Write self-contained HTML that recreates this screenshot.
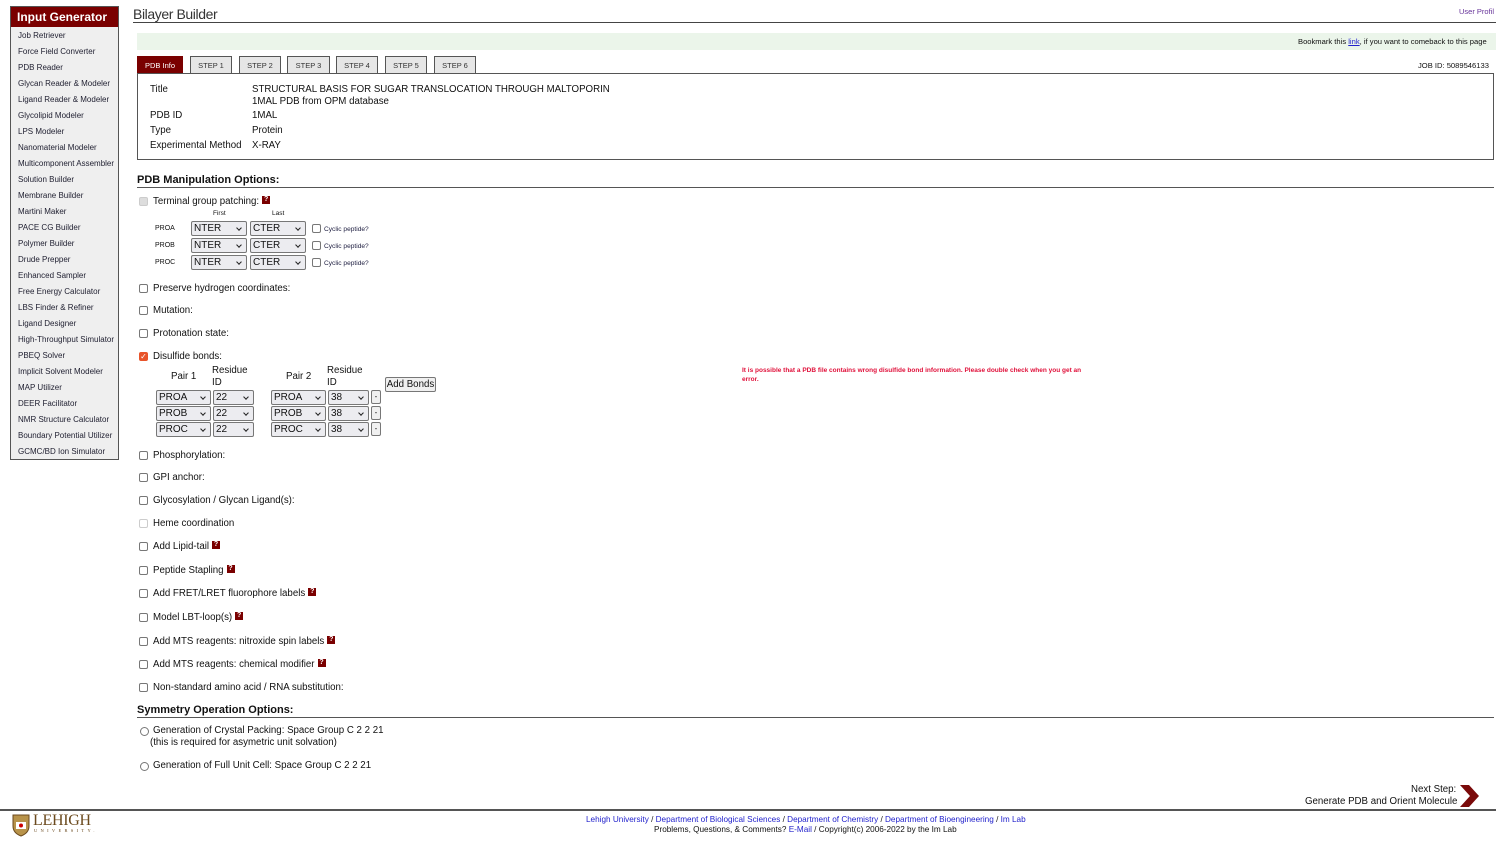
<!DOCTYPE html>
<html><head><meta charset="utf-8">
<style>
*{margin:0;padding:0;box-sizing:border-box}
body{width:1496px;height:846px;position:relative;background:#fff;font-family:"Liberation Sans",Arial,sans-serif;color:#111;overflow:hidden}
.a{position:absolute;white-space:nowrap}
#side{position:absolute;left:10px;top:6px;width:109px;height:454px;background:#efefef;border:1px solid #555}
#side .h{background:#7a0000;color:#fff;font-weight:bold;font-size:12px;height:20px;line-height:20px;padding-left:6px}
#side div.i{position:absolute;left:7px;font-size:8px;color:#223}
.f{font-size:9.7px}
.cb{position:absolute;width:9px;height:9px;border:1px solid #777;border-radius:2px;background:#fff}
.q{display:inline-block;width:8px;height:8px;background:#7a0000;color:#fff;font-size:7px;font-weight:bold;line-height:8px;text-align:center;vertical-align:top;margin-left:3px}
.sel{position:absolute;height:15px;margin-top:-1px;border:1px solid #777;border-radius:2px;background:#ececf0;font-size:10px;line-height:13px;padding-left:2px}
.sel:after{content:"";position:absolute;right:5px;top:4px;width:3px;height:3px;border-right:1px solid #222;border-bottom:1px solid #222;transform:rotate(45deg)}
.tab{position:absolute;top:56px;height:17px;border:1px solid #555;border-bottom:none;background:#e6e6e6;font-size:7.5px;line-height:18px;text-align:center;color:#333}
.rb{position:absolute;width:9px;height:9px;border:1px solid #777;border-radius:50%}
.hd{position:absolute;left:137px;font-weight:bold;font-size:11px}
.ln{position:absolute;left:137px;right:2px;height:1px;background:#555}
.btn{position:absolute;width:10px;height:14px;margin-top:-1px;border:1px solid #777;border-radius:2px;background:#f0f0f0;font-size:8px;text-align:center;line-height:11px}
</style></head><body>
<div id="side"><div class="h">Input Generator</div>
<div class="i" style="top:24px">Job Retriever</div>
<div class="i" style="top:40px">Force Field Converter</div>
<div class="i" style="top:56px">PDB Reader</div>
<div class="i" style="top:72px">Glycan Reader &amp; Modeler</div>
<div class="i" style="top:88px">Ligand Reader &amp; Modeler</div>
<div class="i" style="top:104px">Glycolipid Modeler</div>
<div class="i" style="top:120px">LPS Modeler</div>
<div class="i" style="top:136px">Nanomaterial Modeler</div>
<div class="i" style="top:152px">Multicomponent Assembler</div>
<div class="i" style="top:168px">Solution Builder</div>
<div class="i" style="top:184px">Membrane Builder</div>
<div class="i" style="top:200px">Martini Maker</div>
<div class="i" style="top:216px">PACE CG Builder</div>
<div class="i" style="top:232px">Polymer Builder</div>
<div class="i" style="top:248px">Drude Prepper</div>
<div class="i" style="top:264px">Enhanced Sampler</div>
<div class="i" style="top:280px">Free Energy Calculator</div>
<div class="i" style="top:296px">LBS Finder &amp; Refiner</div>
<div class="i" style="top:312px">Ligand Designer</div>
<div class="i" style="top:328px">High-Throughput Simulator</div>
<div class="i" style="top:344px">PBEQ Solver</div>
<div class="i" style="top:360px">Implicit Solvent Modeler</div>
<div class="i" style="top:376px">MAP Utilizer</div>
<div class="i" style="top:392px">DEER Facilitator</div>
<div class="i" style="top:408px">NMR Structure Calculator</div>
<div class="i" style="top:424px">Boundary Potential Utilizer</div>
<div class="i" style="top:440px">GCMC/BD Ion Simulator</div>
</div>

<div class="a" style="left:133px;top:6px;font-size:14px;color:#333;letter-spacing:-0.4px">Bilayer Builder</div>
<div class="a" style="left:1459px;top:7px;font-size:7.5px;color:#639">User Profil</div>
<div class="a" style="left:133px;top:22px;width:1363px;height:1px;background:#444"></div>
<div class="a" style="left:137px;top:33px;width:1359px;height:17px;background:#ebf5ea"></div>
<div class="a" style="left:1298px;top:37px;font-size:7.6px">Bookmark this <span style="color:#22c;text-decoration:underline">link</span>, if you want to comeback to this page</div>
<div class="a" style="left:1418px;top:61px;font-size:7.6px">JOB ID: 5089546133</div>

<div class="tab" style="left:137px;width:46px;background:#7a0000;color:#fff;border-color:#7a0000">PDB Info</div>
<div class="tab" style="left:190px;width:42px">STEP 1</div>
<div class="tab" style="left:239px;width:42px">STEP 2</div>
<div class="tab" style="left:287px;width:43px">STEP 3</div>
<div class="tab" style="left:336px;width:42px">STEP 4</div>
<div class="tab" style="left:385px;width:42px">STEP 5</div>
<div class="tab" style="left:434px;width:42px">STEP 6</div>
<div class="a" style="left:137px;top:73px;width:1357px;height:87px;border:1px solid #555"></div>
<div class="a f" style="left:150px;top:84px">Title</div>
<div class="a f" style="left:252px;top:84px">STRUCTURAL BASIS FOR SUGAR TRANSLOCATION THROUGH MALTOPORIN</div>
<div class="a f" style="left:252px;top:96px">1MAL PDB from OPM database</div>
<div class="a f" style="left:150px;top:110px">PDB ID</div><div class="a f" style="left:252px;top:110px">1MAL</div>
<div class="a f" style="left:150px;top:125px">Type</div><div class="a f" style="left:252px;top:125px">Protein</div>
<div class="a f" style="left:150px;top:140px">Experimental Method</div><div class="a f" style="left:252px;top:140px">X-RAY</div>

<div class="hd" style="top:174px">PDB Manipulation Options:</div>
<div class="ln" style="top:187px"></div>

<div class="cb" style="left:139px;top:197px;background:#ddd;border-color:#ccc"></div>
<div class="a f" style="left:153px;top:196px">Terminal group patching:<span class="q">?</span></div>
<div class="a" style="left:213px;top:210px;font-size:6.5px">First</div>
<div class="a" style="left:272px;top:210px;font-size:6.5px">Last</div>

<div class="a" style="left:155px;top:225px;font-size:7px">PROA</div>
<div class="sel" style="left:191px;top:222px;width:56px">NTER</div><div class="sel" style="left:250px;top:222px;width:56px">CTER</div>
<div class="cb" style="left:312px;top:224px"></div><div class="a" style="left:324px;top:226px;font-size:6.6px;color:#224">Cyclic peptide?</div>
<div class="a" style="left:155px;top:242px;font-size:7px">PROB</div>
<div class="sel" style="left:191px;top:239px;width:56px">NTER</div><div class="sel" style="left:250px;top:239px;width:56px">CTER</div>
<div class="cb" style="left:312px;top:241px"></div><div class="a" style="left:324px;top:243px;font-size:6.6px;color:#224">Cyclic peptide?</div>
<div class="a" style="left:155px;top:259px;font-size:7px">PROC</div>
<div class="sel" style="left:191px;top:256px;width:56px">NTER</div><div class="sel" style="left:250px;top:256px;width:56px">CTER</div>
<div class="cb" style="left:312px;top:258px"></div><div class="a" style="left:324px;top:260px;font-size:6.6px;color:#224">Cyclic peptide?</div>

<div class="cb" style="left:139px;top:284px"></div><div class="a f" style="left:153px;top:283px">Preserve hydrogen coordinates:</div>
<div class="cb" style="left:139px;top:306px"></div><div class="a f" style="left:153px;top:305px">Mutation:</div>
<div class="cb" style="left:139px;top:329px"></div><div class="a f" style="left:153px;top:328px">Protonation state:</div>
<div class="cb" style="left:139px;top:352px;background:#e8542a;border-color:#e8542a;color:#fff;font-size:8px;line-height:8px;text-align:center">✓</div><div class="a f" style="left:153px;top:351px">Disulfide bonds:</div>

<div class="a f" style="left:171px;top:371px">Pair 1</div>
<div class="a f" style="left:212px;top:365px;line-height:12px;white-space:normal;width:40px">Residue ID</div>
<div class="a f" style="left:286px;top:371px">Pair 2</div>
<div class="a f" style="left:327px;top:365px;line-height:12px;white-space:normal;width:40px">Residue ID</div>
<div class="a" style="left:385px;top:377px;width:51px;height:15px;border:1px solid #777;border-radius:2px;background:#f0f0f0;font-size:9.7px;line-height:13px;text-align:center">Add Bonds</div>
<div class="a" style="left:742px;top:366px;font-size:6.5px;color:#e0103a;font-weight:bold;line-height:9px;white-space:normal;width:352px">It is possible that a PDB file contains wrong disulfide bond information. Please double check when you get an error.</div>

<div class="sel" style="left:156px;top:391px;width:55px">PROA</div><div class="sel" style="left:213px;top:391px;width:41px">22</div>
<div class="sel" style="left:271px;top:391px;width:55px">PROA</div><div class="sel" style="left:328px;top:391px;width:41px">38</div>
<div class="btn" style="left:371px;top:391px">-</div>
<div class="sel" style="left:156px;top:407px;width:55px">PROB</div><div class="sel" style="left:213px;top:407px;width:41px">22</div>
<div class="sel" style="left:271px;top:407px;width:55px">PROB</div><div class="sel" style="left:328px;top:407px;width:41px">38</div>
<div class="btn" style="left:371px;top:407px">-</div>
<div class="sel" style="left:156px;top:423px;width:55px">PROC</div><div class="sel" style="left:213px;top:423px;width:41px">22</div>
<div class="sel" style="left:271px;top:423px;width:55px">PROC</div><div class="sel" style="left:328px;top:423px;width:41px">38</div>
<div class="btn" style="left:371px;top:423px">-</div>

<div class="cb" style="left:139px;top:451px"></div><div class="a f" style="left:153px;top:450px">Phosphorylation:</div>
<div class="cb" style="left:139px;top:473px"></div><div class="a f" style="left:153px;top:472px">GPI anchor:</div>
<div class="cb" style="left:139px;top:496px"></div><div class="a f" style="left:153px;top:495px">Glycosylation / Glycan Ligand(s):</div>
<div class="cb" style="left:139px;top:519px;border-color:#ccc"></div><div class="a f" style="left:153px;top:518px">Heme coordination</div>
<div class="cb" style="left:139px;top:542px"></div><div class="a f" style="left:153px;top:541px">Add Lipid-tail<span class="q">?</span></div>
<div class="cb" style="left:139px;top:566px"></div><div class="a f" style="left:153px;top:565px">Peptide Stapling<span class="q">?</span></div>
<div class="cb" style="left:139px;top:589px"></div><div class="a f" style="left:153px;top:588px">Add FRET/LRET fluorophore labels<span class="q">?</span></div>
<div class="cb" style="left:139px;top:613px"></div><div class="a f" style="left:153px;top:612px">Model LBT-loop(s)<span class="q">?</span></div>
<div class="cb" style="left:139px;top:637px"></div><div class="a f" style="left:153px;top:636px">Add MTS reagents: nitroxide spin labels<span class="q">?</span></div>
<div class="cb" style="left:139px;top:660px"></div><div class="a f" style="left:153px;top:659px">Add MTS reagents: chemical modifier<span class="q">?</span></div>
<div class="cb" style="left:139px;top:683px"></div><div class="a f" style="left:153px;top:682px">Non-standard amino acid / RNA substitution:</div>

<div class="hd" style="top:704px">Symmetry Operation Options:</div>
<div class="ln" style="top:717px"></div>
<div class="rb" style="left:140px;top:727px"></div>
<div class="a f" style="left:153px;top:725px">Generation of Crystal Packing: Space Group C 2 2 21</div>
<div class="a f" style="left:150px;top:737px">(this is required for asymetric unit solvation)</div>
<div class="rb" style="left:140px;top:762px"></div>
<div class="a f" style="left:153px;top:760px">Generation of Full Unit Cell: Space Group C 2 2 21</div>

<div class="a f" style="left:1411px;top:784px">Next Step:</div>
<div class="a f" style="left:1305px;top:796px">Generate PDB and Orient Molecule</div>
<svg class="a" style="left:1459px;top:784px" width="22" height="24" viewBox="0 0 22 24"><path d="M1 1 L10 1 L20 12 L10 23 L1 23 L11 12 Z" fill="#7a0a0a"/></svg>
<div class="a" style="left:0;top:809px;width:1496px;height:2px;background:#555"></div>

<svg class="a" style="left:12px;top:813px" width="18" height="24" viewBox="0 0 18 24"><path d="M1 2 H17 V13 Q17 20 9 23 Q1 20 1 13 Z" fill="#b8934a" stroke="#6b4a1e"/><rect x="4" y="9" width="10" height="7" fill="#fff"/><circle cx="9" cy="12.5" r="2" fill="#c00"/></svg>
<div class="a" style="left:33px;top:812px;font-family:'Liberation Serif',serif;font-size:16px;color:#6b4a1e;letter-spacing:-0.3px">LEHIGH</div>
<div class="a" style="left:34px;top:828px;font-family:'Liberation Serif',serif;font-size:4.5px;color:#6b4a1e;letter-spacing:3.3px">UNIVERSITY.</div>

<div class="a" style="left:586px;top:815px;font-size:8.2px;color:#22c">Lehigh University <span style="color:#111">/</span> Department of Biological Sciences <span style="color:#111">/</span> Department of Chemistry <span style="color:#111">/</span> Department of Bioengineering <span style="color:#111">/</span> Im Lab</div>
<div class="a" style="left:654px;top:825px;font-size:8.2px">Problems, Questions, &amp; Comments? <span style="color:#22c">E-Mail</span> / Copyright(c) 2006-2022 by the Im Lab</div>
</body></html>
